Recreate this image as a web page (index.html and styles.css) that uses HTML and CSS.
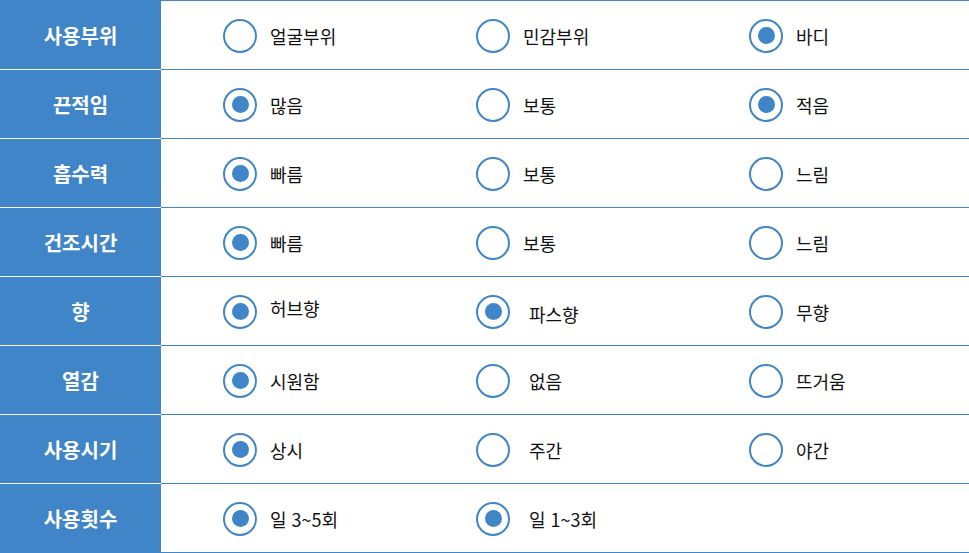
FILE: index.html
```html
<!DOCTYPE html>
<html lang="ko">
<head>
<meta charset="utf-8">
<link rel="stylesheet" href="styles.css">
</head>
<body>
<div class="table">
  <div class="row">
    <div class="th">사용부위</div>
    <div class="td">
      <label class="opt"><span class="radio"></span><span class="txt">얼굴부위</span></label>
      <label class="opt"><span class="radio"></span><span class="txt">민감부위</span></label>
      <label class="opt"><span class="radio on"></span><span class="txt">바디</span></label>
    </div>
  </div>
  <div class="row">
    <div class="th">끈적임</div>
    <div class="td">
      <label class="opt"><span class="radio on"></span><span class="txt">많음</span></label>
      <label class="opt"><span class="radio"></span><span class="txt">보통</span></label>
      <label class="opt"><span class="radio on"></span><span class="txt">적음</span></label>
    </div>
  </div>
  <div class="row">
    <div class="th">흡수력</div>
    <div class="td">
      <label class="opt"><span class="radio on"></span><span class="txt">빠름</span></label>
      <label class="opt"><span class="radio"></span><span class="txt">보통</span></label>
      <label class="opt"><span class="radio"></span><span class="txt">느림</span></label>
    </div>
  </div>
  <div class="row">
    <div class="th">건조시간</div>
    <div class="td">
      <label class="opt"><span class="radio on"></span><span class="txt">빠름</span></label>
      <label class="opt"><span class="radio"></span><span class="txt">보통</span></label>
      <label class="opt"><span class="radio"></span><span class="txt">느림</span></label>
    </div>
  </div>
  <div class="row">
    <div class="th">향</div>
    <div class="td">
      <label class="opt"><span class="radio on"></span><span class="txt up">허브향</span></label>
      <label class="opt"><span class="radio on"></span><span class="txt down wide">파스향</span></label>
      <label class="opt"><span class="radio"></span><span class="txt">무향</span></label>
    </div>
  </div>
  <div class="row">
    <div class="th">열감</div>
    <div class="td">
      <label class="opt"><span class="radio on"></span><span class="txt">시원함</span></label>
      <label class="opt"><span class="radio"></span><span class="txt wide">없음</span></label>
      <label class="opt"><span class="radio"></span><span class="txt">뜨거움</span></label>
    </div>
  </div>
  <div class="row">
    <div class="th">사용시기</div>
    <div class="td">
      <label class="opt"><span class="radio on"></span><span class="txt">상시</span></label>
      <label class="opt"><span class="radio"></span><span class="txt wide">주간</span></label>
      <label class="opt"><span class="radio"></span><span class="txt">야간</span></label>
    </div>
  </div>
  <div class="row last">
    <div class="th">사용횟수</div>
    <div class="td">
      <label class="opt"><span class="radio on"></span><span class="txt">일 3~5회</span></label>
      <label class="opt"><span class="radio on"></span><span class="txt wide">일 1~3회</span></label>
    </div>
  </div>
</div>
</body>
</html>
```

FILE: styles.css
```css
html, body {
  margin: 0;
  padding: 0;
  background: #ffffff;
}

body {
  font-family: "Noto Sans CJK KR", "Noto Sans", sans-serif;
  color: #111111;
}

.table {
  width: 969px;
  border-top: 1px solid #3f85c7;
}

.row {
  display: grid;
  grid-template-columns: 161px 1fr;
  height: 69px;
}

.th {
  background: #3f85c7;
  color: #ffffff;
  font-weight: 700;
  font-size: 20px;
  display: flex;
  align-items: center;
  justify-content: center;
  border-bottom: 1px solid #ffffff;
  box-sizing: border-box;
}

.row.last .th {
  border-bottom-color: #3f85c7;
}

.td {
  display: grid;
  grid-template-columns: 253px 273px 1fr;
  padding-left: 62px;
  padding-top: 1px;
  align-items: center;
  border-bottom: 1px solid #3f85c7;
  box-sizing: border-box;
}

.opt {
  display: flex;
  align-items: center;
  gap: 13px;
}

.radio {
  width: 34px;
  height: 34px;
  box-sizing: border-box;
  border: 2px solid #3f85c7;
  border-radius: 50%;
  display: flex;
  align-items: center;
  justify-content: center;
  flex: none;
}

.radio.on::after {
  content: "";
  width: 17px;
  height: 17px;
  border-radius: 50%;
  background: #3f85c7;
}

.txt {
  font-size: 18px;
  line-height: 24px;
}

.txt.up {
  margin-bottom: 8px;
}

.txt.down {
  margin-top: 4px;
}

.txt.wide {
  margin-left: 6px;
}
```
